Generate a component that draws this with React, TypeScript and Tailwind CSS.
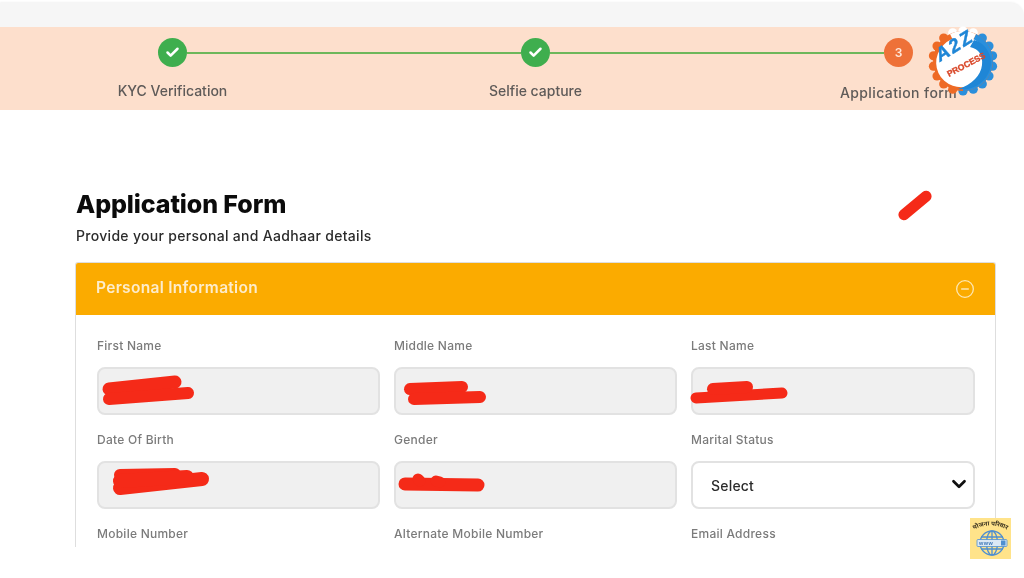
import { Check, ChevronDown, CircleMinus } from "lucide-react";
import type { ReactNode } from "react";

const RED = "#f52a18";

function Scribble({ children }: { children: ReactNode }) {
  return (
    <svg className="absolute left-0 top-0 overflow-visible" width="283" height="48" fill="none" stroke={RED} strokeLinecap="round" strokeLinejoin="round">
      {children}
    </svg>
  );
}

function Field({ label, scribble, children }: { label: string; scribble?: ReactNode; children?: ReactNode }) {
  return (
    <div className="flex flex-col">
      <div className="h-[20px] text-[12px] leading-[20px] font-medium text-[#7b7b7b] tracking-[0.25px]">{label}</div>
      {children ?? (
        <div className="relative mt-[11px] h-[48px] rounded-lg border-2 border-[#e2e2e2] bg-[#f0f0f0]">
          {scribble}
        </div>
      )}
    </div>
  );
}

function Dot({ done, n }: { done?: boolean; n?: number }) {
  return (
    <div className={`flex h-[29px] w-[29px] shrink-0 items-center justify-center rounded-full text-[12px] font-semibold text-[#ffe9dc] ${done ? "bg-[#3fae4e]" : "bg-[#ee7138]"}`}>
      {done ? <Check size={15} strokeWidth={4} className="text-white" /> : n}
    </div>
  );
}

function Gear() {
  const bumps = Array.from({ length: 18 }, (_, i) => (i * 360) / 18);
  return (
    <svg className="absolute left-[926px] top-[25px] overflow-visible" width="74" height="74" viewBox="0 0 74 74">
      {bumps.map((a) => {
        const r = (a * Math.PI) / 180;
        const top = a <= 30 || a >= 330;
        const blue = a > 30 && a < 185;
        const fill = top ? "#ffffff" : blue ? "#2a8fdc" : "#ee6a25";
        return <circle key={a} cx={37 + 30 * Math.sin(r)} cy={36 - 30 * Math.cos(r)} r="4.6" fill={fill} />;
      })}
      <circle cx="37" cy="36" r="30" fill="#ee6a25" />
      <path d="M37 36 L50 9 A30 30 0 0 1 37 66 Z" fill="#2a8fdc" />
      <path d="M37 36 L24 9 A30 30 0 0 1 50 9 Z" fill="#ffffff" />
      <ellipse cx="36" cy="37" rx="26" ry="25" fill="#ffffff" transform="rotate(-25 36 37)" />
      <path d="M48 15 C60 18 68 32 64 44 C60 57 48 66 32 64 C46 60 55 50 56 40 C57 30 53 24 44 22 Z" fill="#1f86d6" />
      <text x="0" y="0" transform="translate(14 37) rotate(-32)" fontFamily="'Liberation Sans', sans-serif" fontWeight="700" fontStyle="italic" fontSize="19" letterSpacing="2" fill="#1f86d6" stroke="#1f86d6" strokeWidth="0.4">A2Z</text>
      <text x="0" y="0" transform="translate(23 52) rotate(-28)" fontFamily="'Liberation Sans', sans-serif" fontWeight="700" fontSize="8.6" fill="#d9482a" stroke="#d9482a" strokeWidth="0.3">PROCESS</text>
    </svg>
  );
}

function Badge() {
  return (
    <div className="absolute left-[970px] top-[518px] h-[41px] w-[41px] bg-[#ffe38a]">
      <svg width="41" height="41" viewBox="0 0 41 41" fill="none">
        <path id="badge-arc" d="M3 12 Q20 3 38 12" />
        <text fontSize="6.2" fontWeight="700" fill="#3b3320" fontFamily="'Noto Sans', 'DejaVu Sans', sans-serif">
          <textPath href="#badge-arc" startOffset="50%" textAnchor="middle">योजना परिवार</textPath>
        </text>
        <g stroke="#4f8fd0" strokeWidth="1.3">
          <circle cx="22" cy="25" r="12" />
          <ellipse cx="22" cy="25" rx="5.5" ry="12" />
          <path d="M22 13 V37 M11 19 H33 M11 31 H33" />
        </g>
        <rect x="7" y="21.5" width="30" height="7" rx="1" fill="#dbe8f5" stroke="#4f8fd0" strokeWidth="0.8" />
        <text x="9" y="27" fontSize="5.5" fontWeight="700" letterSpacing="0.5" fill="#3f78b8" fontFamily="'Liberation Sans', sans-serif">www</text>
        <rect x="31" y="22.5" width="4.5" height="5" fill="#4f8fd0" />
      </svg>
    </div>
  );
}

export default function App() {
  return (
    <div className="relative h-[578px] w-[1024px] overflow-hidden bg-white font-['Inter','Liberation_Sans',sans-serif] blur-[0.5px]">
      <div className="mt-[3px] h-[24px] rounded-tr-[14px] bg-[#f6f6f6] shadow-[0_-1px_2px_rgba(0,0,0,0.05)]" />
      <div className="h-[83px] bg-[#fddfcc] pt-[11px]">
        <div className="flex items-center pl-[158px]">
          <Dot done />
          <div className="h-[2px] w-[334px] bg-[#6db75a]" />
          <Dot done />
          <div className="h-[2px] w-[334px] bg-[#6db75a]" />
          <Dot n={3} />
        </div>
        <div className="-ml-[9px] mt-[15px] flex w-[1089px] text-center text-[14px] font-medium leading-[18px] text-[#5e5a58]">
          <div className="w-[363px]">KYC Verification</div>
          <div className="w-[363px]">Selfie capture</div>
          <div className="mt-[2px] w-[363px] tracking-[0.4px]">Application form</div>
        </div>
      </div>

      <main className="ml-[75px] mr-[28px] mt-[78px] flex flex-col">
        <h1 className="ml-px h-[32px] text-[25px] font-extrabold leading-[32px] tracking-[-0.1px] text-[#0b0b0b]">Application Form</h1>
        <p className="ml-px mt-[7px] h-[18px] text-[14px] font-medium leading-[18px] tracking-[0.3px] text-[#2b2b2b]">Provide your personal and Aadhaar details</p>
        <section className="mt-[17px] h-[285px] overflow-hidden rounded-t-[3px] border border-b-0 border-[#dedede]">
          <div className="flex h-[52px] items-center justify-between bg-[#fbab00] px-[20px]">
            <h2 className="-mt-[2px] text-[15.5px] font-semibold tracking-[0.3px] text-[#fdeccb]">Personal Information</h2>
            <CircleMinus size={20} strokeWidth={1.6} className="text-[#fde6b0]" />
          </div>
          <div className="grid grid-cols-[283px_283px_284px] gap-x-[14px] gap-y-[15px] pl-[21px] pt-[21px]">
            <Field
              label="First Name"
              scribble={
                <Scribble>
                  <path d="M10 20 L76 13" strokeWidth="13" />
                  <path d="M10 30 L89 24" strokeWidth="12" />
                </Scribble>
              }
            />
            <Field
              label="Middle Name"
              scribble={
                <Scribble>
                  <path d="M14 20 L66 18" strokeWidth="12" />
                  <path d="M18 30 L84 28" strokeWidth="12" />
                </Scribble>
              }
            />
            <Field
              label="Last Name"
              scribble={
                <Scribble>
                  <path d="M3 29 L89 24" strokeWidth="11" />
                  <path d="M20 20 L54 18" strokeWidth="12" />
                </Scribble>
              }
            />
            <Field
              label="Date Of Birth"
              scribble={
                <Scribble>
                  <path d="M21 12 L76 11" strokeWidth="12" />
                  <path d="M21 25 L103 16" strokeWidth="14" />
                  <path d="M21 18 L88 14" strokeWidth="14" />
                </Scribble>
              }
            />
            <Field
              label="Gender"
              scribble={
                <Scribble>
                  <path d="M9 21 L82 22" strokeWidth="13" />
                  <path d="M22 16 L24 18 M40 18 L44 19" strokeWidth="11" />
                </Scribble>
              }
            />
            <Field label="Marital Status">
              <div className="relative mt-[11px] h-[48px]">
                <select className="h-full w-full appearance-none rounded-lg border-2 border-[#e2e2e2] bg-white pl-[18px] text-[14px] font-medium tracking-[0.2px] text-[#2a2a2a] outline-none">
                  <option>Select</option>
                </select>
                <ChevronDown size={22} strokeWidth={3} className="pointer-events-none absolute right-[5px] top-[12px] text-[#111]" />
              </div>
            </Field>
            <Field label="Mobile Number"><div /></Field>
            <Field label="Alternate Mobile Number"><div /></Field>
            <Field label="Email Address"><div /></Field>
          </div>
        </section>
      </main>

      <Gear />
      <div className="absolute left-[895px] top-[200px] h-[11px] w-[40px] -rotate-[40deg] rounded-full bg-[#f52a18]" />
      <Badge />
    </div>
  );
}
